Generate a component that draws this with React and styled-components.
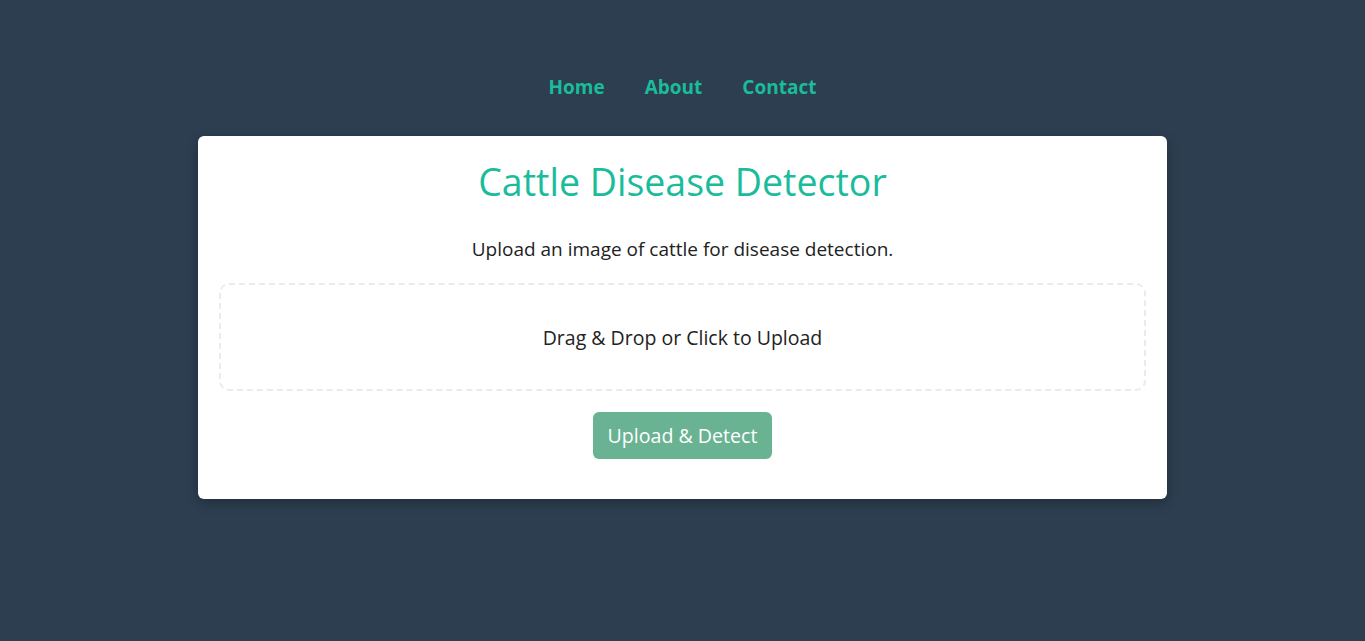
import React from "react";
import styled, { createGlobalStyle } from "styled-components";

const GlobalStyle = createGlobalStyle`
  html, body {
    margin: 0;
    padding: 0;
    background-color: #2c3e50;
    font-family: "Open Sans", "Noto Sans", sans-serif;
  }
`;

const Page = styled.div`
  min-height: 641px;
  display: flex;
  flex-direction: column;
  align-items: center;
`;

const Nav = styled.nav`
  display: flex;
  justify-content: center;
  gap: 40px;
  padding-top: 74px;
  margin-bottom: 36px;
`;

const NavLink = styled.a`
  color: #1abc9c;
  font-weight: 700;
  font-size: 19px;
  line-height: 26px;
  text-decoration: none;
  cursor: pointer;
`;

const Card = styled.div`
  width: 969px;
  box-sizing: border-box;
  background: #ffffff;
  border-radius: 6px;
  box-shadow: 0 4px 12px rgba(0, 0, 0, 0.25);
  padding: 20px 21px 40px;
  display: flex;
  flex-direction: column;
  align-items: center;
`;

const Title = styled.h1`
  margin: 0;
  color: #1abc9c;
  font-size: 37.5px;
  font-weight: 500;
  line-height: 52px;
`;

const Subtitle = styled.p`
  margin: 29px 0 0;
  color: #222;
  font-size: 19px;
  line-height: 24px;
`;

const DropZone = styled.div`
  align-self: stretch;
  margin-top: 22px;
  height: 108px;
  box-sizing: border-box;
  border: 2px dashed #e8ecec;
  border-radius: 10px;
  display: flex;
  align-items: center;
  justify-content: center;
  color: #222;
  font-size: 19.5px;
  cursor: pointer;
`;

const Button = styled.button`
  margin-top: 21px;
  background: #69b393;
  color: #ffffff;
  border: none;
  border-radius: 6px;
  height: 47px;
  padding: 0 15px;
  font-family: inherit;
  font-size: 19.6px;
  cursor: pointer;
`;

export default function App() {
  return (
    <>
      <GlobalStyle />
      <Page>
        <Nav>
          <NavLink>Home</NavLink>
          <NavLink>About</NavLink>
          <NavLink>Contact</NavLink>
        </Nav>
        <Card>
          <Title>Cattle Disease Detector</Title>
          <Subtitle>Upload an image of cattle for disease detection.</Subtitle>
          <DropZone>Drag &amp; Drop or Click to Upload</DropZone>
          <Button>Upload &amp; Detect</Button>
        </Card>
      </Page>
    </>
  );
}
